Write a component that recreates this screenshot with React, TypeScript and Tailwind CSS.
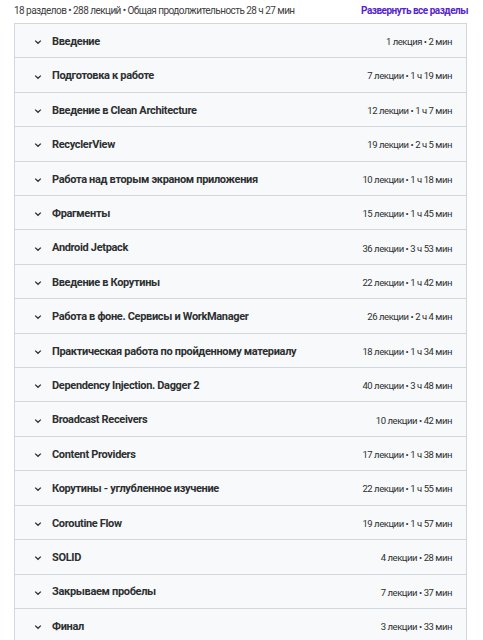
import React from "react";

const sections: [string, string][] = [
  ["Введение", "1 лекция • 2 мин"],
  ["Подготовка к работе", "7 лекции • 1 ч 19 мин"],
  ["Введение в Clean Architecture", "12 лекции • 1 ч 7 мин"],
  ["RecyclerView", "19 лекции • 2 ч 5 мин"],
  ["Работа над вторым экраном приложения", "10 лекции • 1 ч 18 мин"],
  ["Фрагменты", "15 лекции • 1 ч 45 мин"],
  ["Android Jetpack", "36 лекции • 3 ч 53 мин"],
  ["Введение в Корутины", "22 лекции • 1 ч 42 мин"],
  ["Работа в фоне. Сервисы и WorkManager", "26 лекции • 2 ч 4 мин"],
  ["Практическая работа по пройденному материалу", "18 лекции • 1 ч 34 мин"],
  ["Dependency Injection. Dagger 2", "40 лекции • 3 ч 48 мин"],
  ["Broadcast Receivers", "10 лекции • 42 мин"],
  ["Content Providers", "17 лекции • 1 ч 38 мин"],
  ["Корутины - углубленное изучение", "22 лекции • 1 ч 55 мин"],
  ["Coroutine Flow", "19 лекции • 1 ч 57 мин"],
  ["SOLID", "4 лекции • 28 мин"],
  ["Закрываем пробелы", "7 лекции • 37 мин"],
  ["Финал", "3 лекции • 33 мин"],
];

function Chevron() {
  return (
    <svg width="8" height="6" viewBox="0 0 8 6" className="shrink-0">
      <path d="M1.2 1.6 L4 4.3 L6.8 1.6" fill="none" stroke="#2d2f31" strokeWidth="1.3" />
    </svg>
  );
}

export default function App() {
  return (
    <div
      className="w-[483px] h-[640px] overflow-hidden bg-white text-[#2d2f31]"
      style={{ fontFamily: "Roboto, 'Noto Sans', Arial, sans-serif" }}
    >
      <div className="flex items-center justify-between pl-[14px] pr-[15px] h-[23px] pb-[3px]">
        <span className="text-[10px] tracking-[-0.55px] text-[#3e4143]">
          18 разделов • 288 лекций • Общая продолжительность 28 ч 27 мин
        </span>
        <span className="text-[10px] font-bold text-[#5624d0] tracking-[-0.5px]">
          Развернуть все разделы
        </span>
      </div>
      <div className="ml-[14px] w-[453px] border border-[#d1d7dc]">
        {sections.map(([title, meta], i) => (
          <div
            key={i}
            className="flex items-center h-[34.42px] border-b border-[#d1d7dc] bg-[#f7f9fa] pl-[19px] pr-[14px] pt-[3px]"
          >
            <Chevron />
            <span className="ml-[10px] text-[11px] font-bold tracking-[-0.33px] flex-1">{title}</span>
            <span className="text-[9.5px] tracking-[-0.45px] text-[#2d2f31]">{meta}</span>
          </div>
        ))}
      </div>
    </div>
  );
}
